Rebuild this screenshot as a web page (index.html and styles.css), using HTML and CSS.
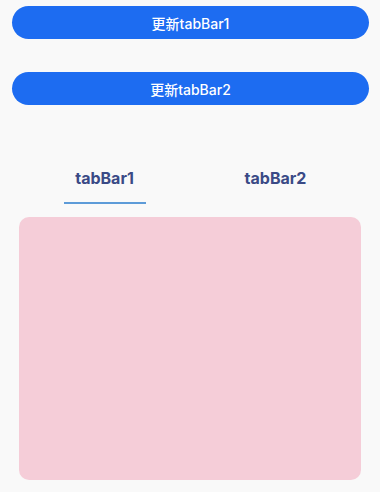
FILE: index.html
```html
<!DOCTYPE html>
<html lang="zh">
<head>
<meta charset="utf-8">
<link rel="stylesheet" href="styles.css">
</head>
<body>
<div class="page">
  <button class="btn">更新tabBar1</button>
  <button class="btn btn-second">更新tabBar2</button>
  <div class="tabs">
    <div class="tab active">
      <span class="tab-label">tabBar1</span>
      <span class="indicator"></span>
    </div>
    <div class="tab">
      <span class="tab-label">tabBar2</span>
      <span class="indicator"></span>
    </div>
  </div>
  <div class="content"></div>
</div>
</body>
</html>
```
FILE: styles.css
```css
html, body {
  margin: 0;
  padding: 0;
  background: #f9f9f9;
}
.page {
  width: 380px;
  height: 492px;
  padding-top: 6px;
  box-sizing: border-box;
  display: flex;
  flex-direction: column;
  font-family: Inter, "Noto Sans", "Noto Sans CJK SC", sans-serif;
}
.btn {
  display: block;
  margin: 0 11px 0 12px;
  height: 33px;
  border: none;
  border-radius: 17px;
  background: #1d6cf1;
  color: #ffffff;
  font-family: Inter, "Noto Sans CJK SC", sans-serif;
  font-size: 14px;
  font-weight: 500;
  padding: 0;
}
.btn-second {
  margin-top: 33px;
}
.tabs {
  margin: 62px 19px 0 19px;
  display: grid;
  grid-template-columns: 1fr 1fr;
}
.tab {
  display: flex;
  flex-direction: column;
  align-items: center;
}
.tab-label {
  font-size: 16px;
  font-weight: 700;
  line-height: 22px;
  color: #3a4a86;
}
.indicator {
  margin-top: 13px;
  width: 82px;
  height: 2px;
  background: transparent;
}
.tab.active .indicator {
  background: #5d9bd8;
}
.content {
  margin: 13px 19px 0 19px;
  height: 263px;
  border-radius: 10px;
  background: #f5cdd8;
}
```
